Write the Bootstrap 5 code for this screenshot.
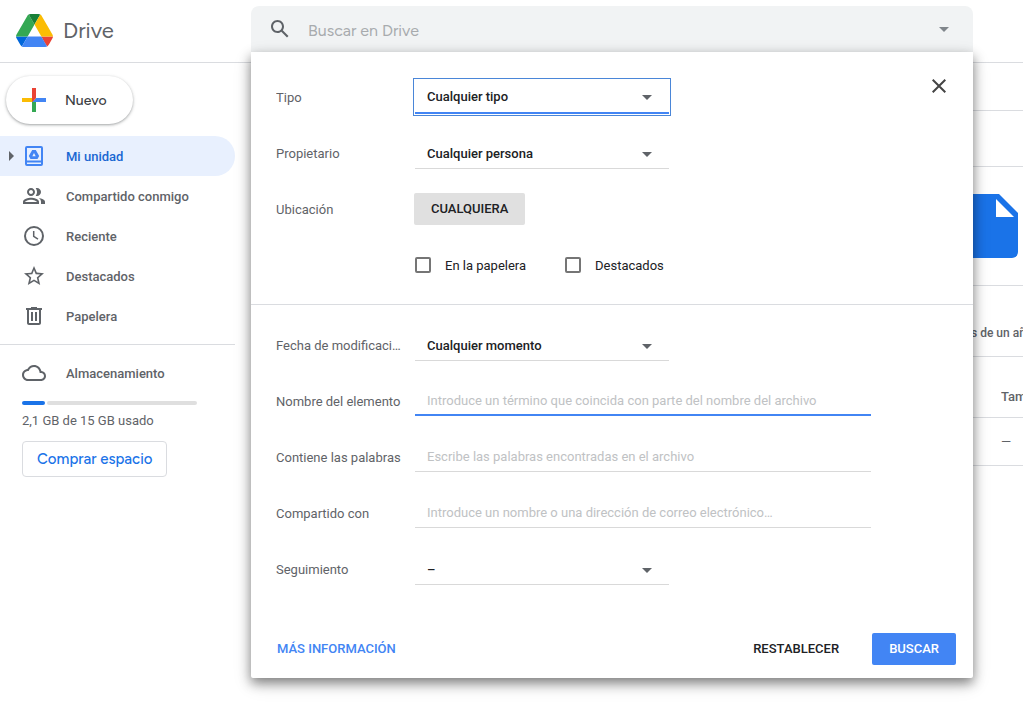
<!DOCTYPE html>
<html lang="es">
<head>
<meta charset="utf-8">
<meta name="viewport" content="width=device-width, initial-scale=1">
<title>Mi unidad - Drive</title>
<link href="https://cdn.jsdelivr.net/npm/bootstrap@5.3.0/dist/css/bootstrap.min.css" rel="stylesheet">
<style>
  :root { --ink: #202124; --muted: #5f6368; --line: #dadce0; --accent: #4285f4; --link: #1967d2; }
  body { font: 13px/20px Roboto, sans-serif; color: var(--muted); background: #fff; min-height: 100vh; }
  svg { display: block; flex: none; }
  .brandish { font-family: "Google Sans", Figtree, Lato, sans-serif; }
  .medium { font-weight: 500; }

  /* header */
  .topbar { height: 63px; border-bottom: 1px solid var(--line); }
  .brand-area { width: 251px; padding: 0 16px 2px; gap: 10px; color: var(--muted); font-size: 22px; line-height: 28px; }
  .brand-area span { padding-top: 2px; }
  .search-wrap { margin: 6px 50px 0 0; z-index: 10; }
  .search-bar { height: 46px; background: #f1f3f4; border-radius: 8px 8px 0 0; padding: 0 24px 0 17px; }
  .search-bar input { font-size: 16px; line-height: 24px; margin-left: 16px; padding: 2px 0 0; height: 32px; }
  .search-bar input::placeholder { color: #a8abae; opacity: 1; }
  .plain { border: 0; background: none; padding: 0; color: inherit; }

  /* sidebar */
  .side { width: 235px; flex: none; padding-top: 13px; margin-right: 16px; }
  .new-btn { height: 48px; margin: 0 0 12px 6px; padding: 0 26px 0 10px; gap: 13px; border: 0; border-radius: 24px; background: #fff; color: #3c4043; font-size: 14px; font-weight: 500; box-shadow: 0 1px 2px rgba(60,64,67,.3), 0 1px 3px 1px rgba(60,64,67,.15); }
  .new-btn span, .side-link span { padding-top: 2px; }
  .side-link { height: 40px; padding: 0 0 0 22px; gap: 20px; color: var(--muted); font-weight: 500; border-radius: 0 20px 20px 0; }
  .side-link.active { background: #e8f0fe; color: var(--link); padding-left: 9px; }
  .side-link.active .tree-arrow { margin-right: -12px; }
  .storage { border-top: 1px solid var(--line); margin-top: 8px; padding-top: 8px; }
  .meter { height: 4px; margin: 8px 38px 6px 22px; gap: 2px; }
  .meter span { height: 4px; border-radius: 2px; background: #dfdfdf; }
  .meter .used { background: #1a73e8; flex: none; }
  .storage-text { padding-left: 22px; }
  .buy-btn { height: 36px; margin: 10px 0 0 22px; padding: 0 14px; border: 1px solid var(--line); border-radius: 4px; background: #fff; color: #1a73e8; font-size: 15px; font-weight: 500; }

  /* file area */
  .files { min-width: 0; }
  .strip { border-bottom: 1px solid var(--line); }
  .edge { width: 52px; overflow: hidden; white-space: nowrap; }
  .crumbs { height: 48px; } .heading { height: 56px; } .preview { height: 119px; padding-top: 27px; } .caption-strip { height: 71px; padding-top: 37px; font-size: 12px; }
  .file-table { table-layout: fixed; }
  .file-table th, .file-table td { padding: 2px 0 0; border-bottom: 1px solid var(--line); overflow: hidden; white-space: nowrap; }
  .file-table th { height: 60px; padding-top: 20px; font-weight: 500; }
  .file-table td { height: 48px; }
  .size-col { width: 22px; }

  /* advanced search panel */
  .panel { background: #fff; border-radius: 0 0 2px 2px; box-shadow: 0 5px 12px rgba(0,0,0,.45), 0 6px 20px rgba(0,0,0,.12); }
  .panel-body { padding: 17px 25px 0; }
  .field { height: 56px; }
  .field-name { width: 125px; margin-right: 14px; padding-top: 2px; flex: none; }
  .pick { width: 254px; height: 32px; padding: 2px 36px 0 12px; border: 0; border-bottom: 1px solid #d9d9d9; border-radius: 0; background-color: transparent; background-image: url("data:image/svg+xml,%3Csvg xmlns='http://www.w3.org/2000/svg' viewBox='0 0 10 5'%3E%3Cpath fill='%235f6368' d='M0 0h10L5 5z'/%3E%3C/svg%3E"); background-position: right 17px top 15px; background-size: 10px 5px; color: var(--ink); font-size: 13px; line-height: 20px; font-weight: 500; }
  .pick.current { height: 34px; border-bottom: 2px solid var(--accent); outline: 1px solid #4a86d8; outline-offset: 1px; }
  .entry { width: 456px; height: 30px; padding: 0 12px; border: 0; border-bottom: 1px solid #d9d9d9; border-radius: 0; font-size: 13px; line-height: 20px; }
  .entry::placeholder { color: #c0c2c4; opacity: 1; }
  .entry.current { border-bottom: 2px solid var(--accent); }
  .tick { width: 16px; height: 16px; margin: 0 14px 0 0; border: 2px solid #757575; flex: none; }
  .tick[type=checkbox] { border-radius: 2px; }
  .tick-item { width: 150px; color: var(--ink); }
  .tick-item span { padding-top: 2px; }
  .act { height: 32px; border: 0; border-radius: 2px; padding: 0 17px; font-size: 13px; line-height: 20px; font-weight: 500; color: var(--ink); }
  .act-any { background: #e0e0e0; margin-left: -1px; }
  .act-go, .act-go:hover { background: var(--accent); color: #fff; }
  .panel-rule { border-top: 1px solid var(--line); margin-top: 11px; }
  .panel-foot { padding: 36px 17px 13px 26px; gap: 16px; }
  .more { color: var(--accent); }
  .close-btn { top: 27px; right: 27px; }
</style>
</head>
<body>
<header class="topbar d-flex">
  <a href="#" class="brand-area brandish d-flex align-items-center text-decoration-none">
    <svg width="37" height="33" viewBox="0 0 87.3 78" aria-hidden="true">
      <path fill="#0066da" d="m6.6 66.85 3.85 6.65c.8 1.4 1.95 2.5 3.3 3.3l13.75-23.8h-27.5c0 1.55.4 3.1 1.2 4.5z"/>
      <path fill="#34a853" d="m43.65 25-13.75-23.8c-1.35.8-2.5 1.9-3.3 3.3l-25.4 44a9.06 9.06 0 0 0-1.2 4.5h27.5z"/>
      <path fill="#ea4335" d="m73.55 76.8c1.35-.8 2.5-1.9 3.3-3.3l1.6-2.75 7.65-13.25c.8-1.4 1.2-2.95 1.2-4.5h-27.5l5.85 11.5z"/>
      <path fill="#188038" d="m43.65 25 13.75-23.8c-1.35-.8-2.9-1.2-4.5-1.2h-18.5c-1.6 0-3.15.45-4.5 1.2z"/>
      <path fill="#4285f4" d="m59.8 53h-32.3l-13.75 23.8c1.35.8 2.9 1.2 4.5 1.2h50.8c1.6 0 3.15-.45 4.5-1.2z"/>
      <path fill="#fbbc04" d="m73.4 26.5-12.7-22c-.8-1.4-1.95-2.5-3.3-3.3l-13.75 23.8 16.15 28h27.45c0-1.55-.4-3.1-1.2-4.5z"/>
    </svg>
    <span>Drive</span>
  </a>
  <div class="search-wrap position-relative flex-grow-1 align-self-start">
    <form class="search-bar d-flex align-items-center" role="search">
      <button type="button" class="plain" aria-label="Buscar">
        <svg width="24" height="24" viewBox="0 0 24 24" fill="#5f6368"><path d="M20.49 19l-5.73-5.73C15.53 12.2 16 10.91 16 9.5 16 5.91 13.09 3 9.5 3S3 5.91 3 9.5 5.91 16 9.5 16c1.41 0 2.7-.47 3.77-1.24L19 20.49 20.49 19zM5 9.5C5 7.01 7.01 5 9.5 5S14 7.01 14 9.5 11.99 14 9.5 14 5 11.99 5 9.5z"/></svg>
      </button>
      <input type="text" class="plain brandish flex-grow-1" placeholder="Buscar en Drive" aria-label="Buscar en Drive">
      <button type="button" class="plain" aria-label="Opciones de búsqueda">
        <svg width="10" height="5" viewBox="0 0 10 5" fill="#80868b"><path d="M0 0h10L5 5z"/></svg>
      </button>
    </form>

    <section class="panel position-absolute top-100 start-0 w-100">
      <button type="button" class="plain close-btn position-absolute" aria-label="Cerrar">
        <svg width="14" height="14" viewBox="0 0 14 14" stroke="#444" stroke-width="2"><path d="M.7.7l12.6 12.6M13.3.7L.7 13.3"/></svg>
      </button>
      <div class="panel-body">
        <div class="field d-flex align-items-center">
          <label class="field-name text-truncate" for="type">Tipo</label>
          <select id="type" class="form-select pick current"><option>Cualquier tipo</option></select>
        </div>
        <div class="field d-flex align-items-center">
          <label class="field-name text-truncate" for="owner">Propietario</label>
          <select id="owner" class="form-select pick"><option>Cualquier persona</option></select>
        </div>
        <div class="field d-flex align-items-center">
          <label class="field-name text-truncate" for="place">Ubicación</label>
          <button type="button" id="place" class="btn act act-any">CUALQUIERA</button>
        </div>
        <div class="field d-flex align-items-center">
          <span class="field-name"></span>
          <label class="tick-item d-flex align-items-center"><input type="checkbox" class="form-check-input tick"><span>En la papelera</span></label>
          <label class="tick-item d-flex align-items-center"><input type="checkbox" class="form-check-input tick"><span>Destacados</span></label>
        </div>
      </div>
      <div class="panel-rule"></div>
      <div class="panel-body pt-2 mt-1">
        <div class="field d-flex align-items-center">
          <label class="field-name text-truncate" for="date">Fecha de modificación</label>
          <select id="date" class="form-select pick"><option>Cualquier momento</option></select>
        </div>
        <div class="field d-flex align-items-center">
          <label class="field-name text-nowrap" for="item">Nombre del elemento</label>
          <input id="item" type="text" class="form-control entry current" placeholder="Introduce un término que coincida con parte del nombre del archivo">
        </div>
        <div class="field d-flex align-items-center">
          <label class="field-name text-nowrap" for="words">Contiene las palabras</label>
          <input id="words" type="text" class="form-control entry" placeholder="Escribe las palabras encontradas en el archivo">
        </div>
        <div class="field d-flex align-items-center">
          <label class="field-name text-truncate" for="shared">Compartido con</label>
          <input id="shared" type="text" class="form-control entry" placeholder="Introduce un nombre o una dirección de correo electrónico…">
        </div>
        <div class="field d-flex align-items-center">
          <label class="field-name text-truncate" for="follow">Seguimiento</label>
          <select id="follow" class="form-select pick"><option>–</option></select>
        </div>
      </div>
      <div class="panel-foot d-flex align-items-center">
        <a href="#" class="more medium me-auto text-decoration-none">MÁS INFORMACIÓN</a>
        <button type="reset" class="btn act">RESTABLECER</button>
        <button type="submit" class="btn act act-go">BUSCAR</button>
      </div>
    </section>
  </div>
</header>

<div class="d-flex">
  <aside class="side">
    <button type="button" class="new-btn brandish d-flex align-items-center">
      <svg width="36" height="36" viewBox="0 0 36 36"><path fill="#34a853" d="M16 16v14h4V20z"/><path fill="#4285f4" d="M30 16H20l-4 4h14z"/><path fill="#fbbc05" d="M6 16v4h10l4-4z"/><path fill="#ea4335" d="M20 16V6h-4v14z"/></svg>
      <span>Nuevo</span>
    </button>
    <nav class="nav flex-column flex-nowrap">
      <a href="#" class="nav-link side-link active d-flex align-items-center">
        <svg class="tree-arrow" width="5" height="10" viewBox="0 0 5 10" fill="#5f6368"><path d="M0 0l5 5-5 5z"/></svg>
        <svg width="24" height="24" viewBox="0 0 24 24" fill="#4285f4"><path fill-rule="evenodd" d="M19 2H5a2 2 0 0 0-2 2v16a2 2 0 0 0 2 2h14a2 2 0 0 0 2-2V4a2 2 0 0 0-2-2zM5 20v-1.600h14V20zm14-3.400H5V4h14z"/><path fill-rule="evenodd" d="M10.200 6h3.600l3.400 6-1.700 3h-7L6.800 12zM12 9l-1.700 3.200h3.400z"/></svg>
        <span>Mi unidad</span>
      </a>
      <a href="#" class="nav-link side-link d-flex align-items-center">
        <svg width="24" height="24" viewBox="0 0 24 24" fill="#5f6368"><path fill-rule="evenodd" d="M9 12c2.210 0 4-1.790 4-4s-1.790-4-4-4-4 1.790-4 4 1.790 4 4 4zm0-6c1.100 0 2 .9 2 2s-.9 2-2 2-2-.9-2-2 .9-2 2-2zM9 13.750c-2.670 0-8 1.340-8 4V20h16v-2.250c0-2.660-5.330-4-8-4zM3 18c.2-.7 3.300-2.250 6-2.250S14.800 17.300 15 18zM15 12c2.210 0 4-1.790 4-4s-1.790-4-4-4c-.47 0-.91.100-1.330.240C14.500 5.270 15 6.580 15 8s-.5 2.730-1.330 3.760c.42.140.86.240 1.330.240zM16.700 13.950C18.100 14.850 19 16.100 19 17.750V20h4v-2.250c0-2.180-3.580-3.470-6.300-3.800z"/></svg>
        <span>Compartido conmigo</span>
      </a>
      <a href="#" class="nav-link side-link d-flex align-items-center">
        <svg width="24" height="24" viewBox="0 0 24 24" fill="none" stroke="#5f6368" stroke-width="2"><circle cx="12" cy="12" r="9"/><path stroke-width="1.500" d="M11.700 7v5.400l4.300 2.800"/></svg>
        <span>Reciente</span>
      </a>
      <a href="#" class="nav-link side-link d-flex align-items-center">
        <svg width="24" height="24" viewBox="0 0 24 24" fill="#5f6368"><path d="M22 9.240l-7.190-.62L12 2 9.190 8.630 2 9.240l5.460 4.730L5.820 21 12 17.270 18.180 21l-1.630-7.030L22 9.240zM12 15.400l-3.760 2.270 1-4.280-3.320-2.880 4.380-.38L12 6.100l1.710 4.040 4.380.38-3.320 2.880 1 4.280L12 15.400z"/></svg>
        <span>Destacados</span>
      </a>
      <a href="#" class="nav-link side-link d-flex align-items-center">
        <svg width="24" height="24" viewBox="0 0 24 24" fill="#5f6368"><path d="M15 4V3H9v1H4v2h1v13c0 1.100.9 2 2 2h10c1.100 0 2-.9 2-2V6h1V4h-5zm2 15H7V6h10v13zM9 8h2v9H9zm4 0h2v9h-2z"/></svg>
        <span>Papelera</span>
      </a>
    </nav>
    <div class="storage">
      <a href="#" class="nav-link side-link d-flex align-items-center">
        <svg width="24" height="24" viewBox="0 0 24 24" fill="#5f6368"><path d="M19.350 10.040C18.670 6.590 15.640 4 12 4 9.110 4 6.600 5.640 5.350 8.040 2.340 8.360 0 10.910 0 14c0 3.310 2.690 6 6 6h13c2.760 0 5-2.240 5-5 0-2.640-2.050-4.780-4.650-4.960zM19 18H6c-2.210 0-4-1.790-4-4 0-2.050 1.530-3.760 3.560-3.970l1.070-.11.500-.95C8.080 7.140 9.940 6 12 6c2.620 0 4.880 1.860 5.390 4.430l.3 1.500 1.530.110c1.560.100 2.780 1.410 2.780 2.960 0 1.650-1.350 3-3 3z"/></svg>
        <span>Almacenamiento</span>
      </a>
      <div class="meter d-flex"><span class="used" style="width:13%"></span><span class="flex-grow-1"></span></div>
      <div class="storage-text">2,1 GB de 15 GB usado</div>
      <button type="button" class="buy-btn brandish">Comprar espacio</button>
    </div>
  </aside>

  <main class="files flex-grow-1">
    <div class="strip crumbs"></div>
    <div class="strip heading"></div>
    <div class="strip preview">
      <div class="edge ms-auto">
        <svg width="47" height="64" viewBox="0 0 47 64"><path fill="#1a73e8" d="M0 0h28l19 19v39a6 6 0 0 1-6 6H0z"/><path fill="#fff" d="M25 5v18h18z"/></svg>
      </div>
    </div>
    <div class="strip caption-strip"><div class="edge ms-auto medium">s de un año</div></div>
    <table class="file-table w-100">
      <colgroup><col><col class="size-col"></colgroup>
      <thead><tr><th></th><th>Tamaño</th></tr></thead>
      <tbody><tr><td></td><td>—</td></tr></tbody>
    </table>
  </main>
</div>
<script src="https://cdn.jsdelivr.net/npm/bootstrap@5.3.0/dist/js/bootstrap.bundle.min.js"></script>
</body>
</html>
